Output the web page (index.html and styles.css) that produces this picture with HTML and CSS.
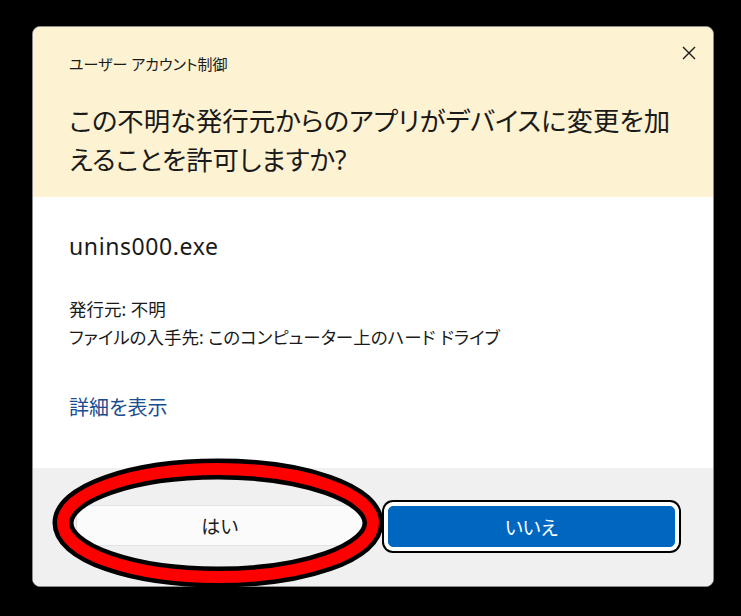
FILE: index.html
```html
<!DOCTYPE html>
<html lang="ja">
<head>
<meta charset="utf-8">
<title>ユーザー アカウント制御</title>
<link rel="stylesheet" href="styles.css">
</head>
<body>
<div class="dialog">
  <div class="header">
    <div class="header-top">
      <div class="caption">ユーザー アカウント制御</div>
      <button class="close" aria-label="閉じる">
        <svg width="14" height="14" viewBox="0 0 14 14"><path d="M1 1 L13 13 M13 1 L1 13" stroke="#1a1a1a" stroke-width="1.4" fill="none"/></svg>
      </button>
    </div>
    <h1 class="question">この不明な発行元からのアプリがデバイスに変更を加えることを許可しますか?</h1>
  </div>
  <div class="content">
    <div class="filename">unins000.exe</div>
    <div class="info">
      <div>発行元: 不明</div>
      <div>ファイルの入手先: このコンピューター上のハード ドライブ</div>
    </div>
    <a class="details" href="#">詳細を表示</a>
  </div>
  <div class="footer">
    <button class="btn btn-yes">はい</button>
    <button class="btn btn-no">いいえ</button>
  </div>
</div>
<svg class="annotation" width="332" height="130" viewBox="0 0 332 130">
  <ellipse cx="166" cy="65" rx="155" ry="54" fill="none" stroke="#000" stroke-width="21"/>
  <ellipse cx="166" cy="65" rx="155" ry="54" fill="none" stroke="#ff0000" stroke-width="12"/>
</svg>
</body>
</html>
```
FILE: styles.css
```css
html, body {
  margin: 0;
  padding: 0;
}
body {
  background: #000;
  width: 741px;
  height: 616px;
  position: relative;
  overflow: hidden;
  font-family: "Noto Sans", "Noto Sans CJK JP", sans-serif;
  font-feature-settings: "palt";
  color: #1a1a1a;
}
.dialog {
  position: absolute;
  left: 32px;
  top: 26px;
  width: 682px;
  height: 561px;
  box-sizing: border-box;
  border: 1px solid #8c8c8c;
  border-radius: 8px;
  overflow: hidden;
  display: flex;
  flex-direction: column;
  background: #fff;
}
.header {
  background: #fdf2d2;
  height: 170px;
  box-sizing: border-box;
  padding: 0 0 0 36px;
  flex: none;
}
.header-top {
  display: flex;
  justify-content: space-between;
  align-items: flex-start;
}
.caption {
  font-size: 15px;
  line-height: 20px;
  margin-top: 27px;
}
.close {
  border: 0;
  background: none;
  padding: 0;
  margin: 19px 17px 0 0;
  width: 14px;
  height: 14px;
  display: flex;
}
.question {
  margin: 28px 0 0 0;
  font-weight: normal;
  font-size: 26.4px;
  line-height: 39px;
  width: 610px;
}
.content {
  height: 271px;
  box-sizing: border-box;
  padding: 0 0 0 36px;
  flex: none;
}
.filename {
  font-size: 23px;
  letter-spacing: 0.6px;
  line-height: 28px;
  margin-top: 35px;
}
.info {
  margin-top: 35px;
  font-size: 17.5px;
  line-height: 28px;
}
.details {
  display: inline-block;
  margin-top: 45px;
  font-size: 20px;
  line-height: 24px;
  color: #1a4d8f;
  text-decoration: none;
}
.footer {
  flex: 1;
  background: #f0f0f0;
  display: grid;
  grid-template-columns: 1fr 1fr;
  column-gap: 24px;
  padding: 37px 38px 0 43px;
  align-items: start;
}
.btn {
  font-family: "Noto Sans", "Noto Sans CJK JP", sans-serif;
  font-feature-settings: "palt";
  font-size: 19px;
  height: 41px;
  border-radius: 5px;
  padding: 0;
}
.btn-yes {
  background: #fbfbfb;
  border: 1px solid #e2e2e2;
  color: #1a1a1a;
}
.btn-no {
  background: #0067c0;
  border: 1px solid #0067c0;
  color: #fff;
  margin-top: 1px;
  box-shadow: 0 0 0 4px #fff, 0 0 0 6px #000;
}
.annotation {
  position: absolute;
  left: 52px;
  top: 458px;
}
```
